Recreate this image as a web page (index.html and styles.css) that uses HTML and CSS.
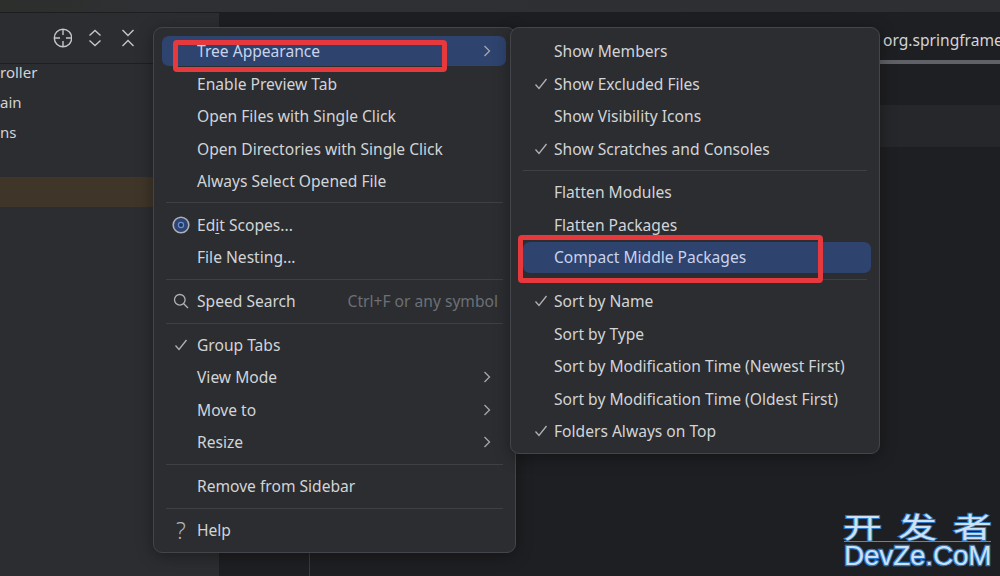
FILE: index.html
```html
<!DOCTYPE html>
<html lang="en">
<head>
<meta charset="utf-8">
<title>Project view options</title>
<link rel="stylesheet" href="styles.css">
</head>
<body>
<div class="topstrip"></div>
<div class="main">
  <aside class="sidebar">
    <div class="toolbar">
      <svg class="tool" viewBox="-1 0 20 20"><circle cx="10" cy="10" r="8.700"/><path d="M10 1.300V7M10 13v5.700M1.300 10H7M13 10h5.700"/></svg>
      <svg class="tool" viewBox="0 0 20 20"><path d="M4.500 7.500 10 2.500l5.500 5M4.500 12.500 10 17.500l5.500-5"/></svg>
      <svg class="tool" viewBox="0 0 20 20"><path d="M4.500 2 10 7.500 15.500 2M4.500 18 10 12.500 15.500 18"/></svg>
    </div>
    <div class="tree">
      <div class="tree-row">roller</div>
      <div class="tree-row">ain</div>
      <div class="tree-row">ns</div>
      <div class="tree-row"></div>
      <div class="tree-row selected"></div>
    </div>
  </aside>
  <section class="editor">
    <div class="tabs"><span class="tab">org.springframe</span></div>
    <div class="crumb"></div>
    <div class="guide"></div>
  </section>
</div>

<div class="menu menu-main">
  <div class="row active"><span class="ico"></span><span class="label">Tree Appearance</span><svg class="arrow" viewBox="0 0 10 12"><path d="M2.500 1 7.500 6 2.500 11"/></svg></div>
  <div class="row"><span class="ico"></span><span class="label">Enable Preview Tab</span></div>
  <div class="row"><span class="ico"></span><span class="label">Open Files with Single Click</span></div>
  <div class="row"><span class="ico"></span><span class="label">Open Directories with Single Click</span></div>
  <div class="row"><span class="ico"></span><span class="label">Always Select Opened File</span></div>
  <div class="sep"></div>
  <div class="row"><span class="ico"><svg class="scope" viewBox="0 0 18 18"><circle class="scope-ring" cx="9" cy="9" r="7.800"/><circle class="scope-dot" cx="9" cy="9" r="2.600"/></svg></span><span class="label">Ed<span class="mn">i</span>t Scopes...</span></div>
  <div class="row"><span class="ico"></span><span class="label">File Nesting...</span></div>
  <div class="sep"></div>
  <div class="row"><span class="ico"><svg class="glyph" viewBox="0 0 16 16"><circle cx="6.800" cy="6.800" r="5.300"/><path d="m10.700 10.700 4.300 4.300"/></svg></span><span class="label">Speed Search</span><span class="hint">Ctrl+F or any symbol</span></div>
  <div class="sep"></div>
  <div class="row"><span class="ico"><svg class="glyph" viewBox="0 0 16 16"><path d="m2.500 8.500 3.500 4L13.500 3"/></svg></span><span class="label">Group Tabs</span></div>
  <div class="row"><span class="ico"></span><span class="label">View Mode</span><svg class="arrow" viewBox="0 0 10 12"><path d="M2.500 1 7.500 6 2.500 11"/></svg></div>
  <div class="row"><span class="ico"></span><span class="label">Move to</span><svg class="arrow" viewBox="0 0 10 12"><path d="M2.500 1 7.500 6 2.500 11"/></svg></div>
  <div class="row"><span class="ico"></span><span class="label">Resize</span><svg class="arrow" viewBox="0 0 10 12"><path d="M2.500 1 7.500 6 2.500 11"/></svg></div>
  <div class="sep"></div>
  <div class="row"><span class="ico"></span><span class="label">Remove from Sidebar</span></div>
  <div class="sep"></div>
  <div class="row"><span class="ico help">?</span><span class="label">Help</span></div>
</div>

<div class="menu menu-sub">
  <div class="row"><span class="ico"></span><span class="label">Show Members</span></div>
  <div class="row"><span class="ico"><svg class="glyph" viewBox="0 0 16 16"><path d="m2.500 8.500 3.500 4L13.500 3"/></svg></span><span class="label">Show Excluded Files</span></div>
  <div class="row"><span class="ico"></span><span class="label">Show Visibility Icons</span></div>
  <div class="row"><span class="ico"><svg class="glyph" viewBox="0 0 16 16"><path d="m2.500 8.500 3.500 4L13.500 3"/></svg></span><span class="label">Show Scratches and Consoles</span></div>
  <div class="sep"></div>
  <div class="row"><span class="ico"></span><span class="label">Flatten Modules</span></div>
  <div class="row"><span class="ico"></span><span class="label">Flatten Packages</span></div>
  <div class="row active"><span class="ico"></span><span class="label">Compact Middle Packages</span></div>
  <div class="sep"></div>
  <div class="row"><span class="ico"><svg class="glyph" viewBox="0 0 16 16"><path d="m2.500 8.500 3.500 4L13.500 3"/></svg></span><span class="label">Sort by Name</span></div>
  <div class="row"><span class="ico"></span><span class="label">Sort by Type</span></div>
  <div class="row"><span class="ico"></span><span class="label">Sort by Modification Time (Newest First)</span></div>
  <div class="row"><span class="ico"></span><span class="label">Sort by Modification Time (Oldest First)</span></div>
  <div class="row"><span class="ico"><svg class="glyph" viewBox="0 0 16 16"><path d="m2.500 8.500 3.500 4L13.500 3"/></svg></span><span class="label">Folders Always on Top</span></div>
</div>

<div class="mark mark-one"></div>
<div class="mark mark-two"></div>

<div class="watermark">
  <div class="wm-top"><span>开</span><span>发</span><span>者</span></div>
  <div class="wm-bottom">DevZe.CoM</div>
</div>
</body>
</html>
```
FILE: styles.css
```css
* { box-sizing: border-box; }
html, body { height: 100%; }
body {
  margin: 0;
  width: 1000px;
  height: 576px;
  overflow: hidden;
  position: relative;
  display: flex;
  flex-direction: column;
  background: #1e1f22;
  color: #d2d4d8;
  font-family: "Noto Sans", "Liberation Sans", sans-serif;
  font-size: 15.6px;
}
.topstrip {
  height: 13px;
  flex: none;
  background: linear-gradient(90deg, #2c2f2c 0, #2f3033 160px, #2e2f32 100%);
  border-bottom: 1px solid #1d1e20;
}
.main { flex: 1; display: flex; min-height: 0; }
.sidebar { width: 219px; flex: none; background: #2b2d30; overflow: hidden; }
.toolbar {
  height: 51px;
  border-bottom: 1px solid #1e1f22;
  display: flex;
  align-items: center;
  justify-content: flex-end;
  gap: 13px;
  padding: 0 81px 1px 0;
}
.tool { width: 20px; height: 20px; fill: none; stroke: #c4c6ca; stroke-width: 1.4; }
.tree { margin-top: -7px; color: #d2d4d8; font-size: 15px; }
.tree-row { height: 30px; line-height: 30px; }
.tree-row.selected { background: #3f3528; }
.editor { flex: 1; min-width: 0; background: #1e1f22; position: relative; }
.tabs { height: 51px; display: flex; justify-content: flex-end; overflow: hidden; }
.tab {
  flex: none;
  width: 120px;
  padding: 16px 0 0 3px;
  white-space: nowrap;
  border-bottom: 4px solid #5f6166;
  line-height: 22px;
}
.crumb { height: 42px; margin-top: 41px; background: #26272a; }
.guide { position: absolute; left: 90px; top: 400px; bottom: 0; width: 1px; background: #393b40; }

.menu {
  position: absolute;
  top: 27px;
  background: #2b2d30;
  border: 1px solid #43454a;
  border-radius: 9px;
  box-shadow: 0 3px 16px rgba(0, 0, 0, .35);
}
.menu-main { left: 153px; width: 363px; height: 526px; padding: 6.800px 0 0; }
.menu-sub { left: 510px; width: 370px; height: 427px; padding: 6.800px 0 0; }

.row {
  height: 32.500px;
  margin: 0 9px 0 8px;
  padding: 0 0 0 8px;
  border-block: 1px solid transparent;
  background-clip: padding-box;
  border-radius: 7px;
  display: flex;
  align-items: center;
  white-space: nowrap;
}
.menu-sub .row { margin: 0 8px 0 12px; padding-left: 7px; }
.row.active { background-color: #2e436e; color: #c9d4ec; }
.ico {
  width: 22px;
  flex: none;
  display: flex;
  align-items: center;
  justify-content: center;
  margin-right: 5px;
}
.menu-sub .ico { margin-right: 2px; }
.label { flex: none; }
.mn { text-decoration: underline; text-underline-offset: 2px; }
.hint { margin-left: auto; margin-right: 8px; color: #6d7076; }
.arrow { width: 10px; height: 12px; margin-left: auto; margin-right: 14px; fill: none; stroke: #a6a8ad; stroke-width: 1.3; }
.glyph { width: 16px; height: 16px; fill: none; stroke: #b0b2b6; stroke-width: 1.3; }
.scope { width: 18px; height: 18px; }
.scope-ring { fill: #2b4473; stroke: #aeb0b5; stroke-width: 1.6; }
.scope-dot { fill: #20345c; stroke: #6b8ed0; stroke-width: 1.2; }
.help { color: #b0b2b6; font-size: 23px; line-height: 20px; font-weight: 300; }
.sep { height: 1px; margin: 5.150px 12px; background: #3e4045; }

.mark {
  position: absolute;
  border: 5px solid #e6393e;
  border-radius: 4px;
}
.mark-one { left: 173px; top: 40px; width: 274px; height: 32px; }
.mark-two { left: 518px; top: 235px; width: 305px; height: 48px; }

.watermark {
  position: absolute;
  left: 844px;
  top: 511px;
  width: 147px;
  color: #cfe0f0;
  -webkit-text-stroke: 2.500px #2a78c8;
  paint-order: stroke fill;
}
.wm-top {
  display: flex;
  justify-content: space-between;
  font-family: "Noto Sans CJK SC", sans-serif;
  font-size: 39px;
  line-height: 30px;
  height: 31px;
  border-bottom: 1px solid #3d8fdc;
}
.wm-top span { transform: scaleY(.72); transform-origin: center 50%; display: block; line-height: 30px; height: 30px; margin-inline: -1px; }
.wm-bottom { font-family: "Liberation Sans", sans-serif; font-size: 27.800px; line-height: 27px; letter-spacing: -.1px; white-space: nowrap; }
```
